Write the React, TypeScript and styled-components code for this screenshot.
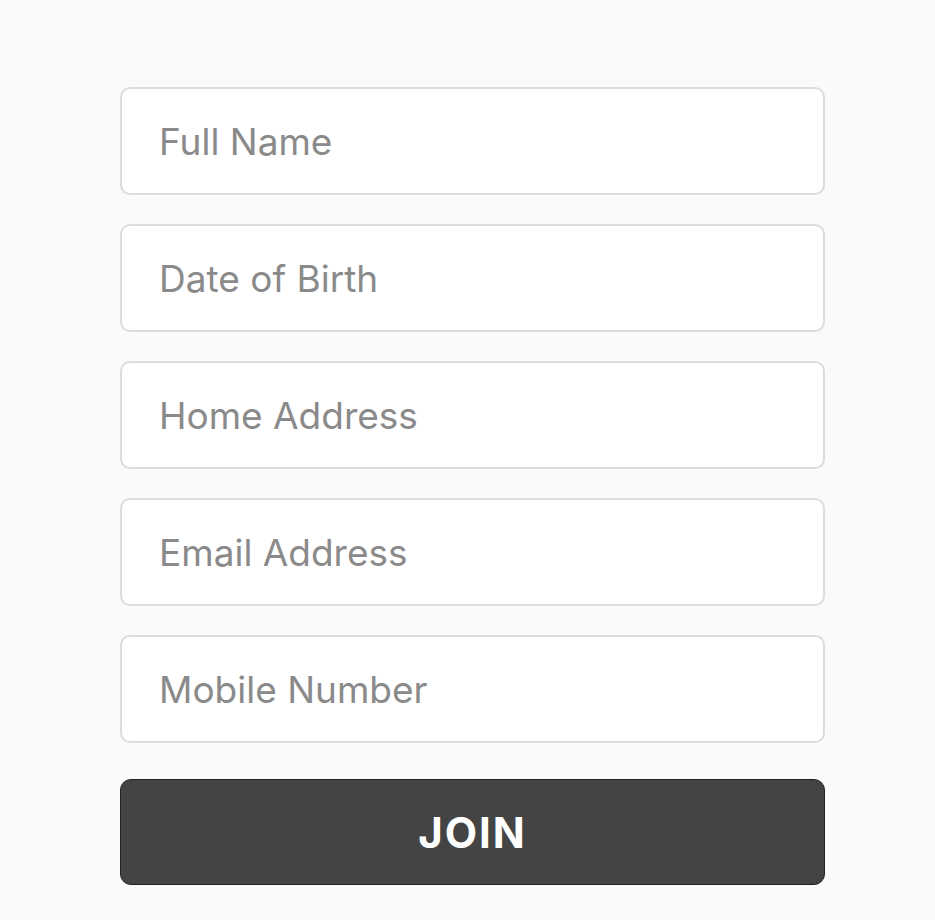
import React from 'react'
import styled, { createGlobalStyle } from 'styled-components'

const GlobalStyle = createGlobalStyle`
  html, body {
    margin: 0;
    padding: 0;
    background: #fafafa;
  }
  body {
    font-family: Inter, "Noto Sans", sans-serif;
  }
`;

const Page = styled.div`
  width: 935px;
  height: 920px;
  display: flex;
  padding: 87px 0 0 120px;
  box-sizing: border-box;
`;

const Form = styled.form`
  width: 705px;
  display: flex;
  flex-direction: column;
  gap: 29px;
`;

const Field = styled.input`
  height: 108px;
  box-sizing: border-box;
  border: 2px solid #dcdcdc;
  border-radius: 10px;
  background: #fff;
  padding: 0 37px;
  font-family: Inter, "Noto Sans", sans-serif;
  font-size: 37px;
  color: #333;
  outline: none;
  &::placeholder {
    color: #8a8a8a;
  }
`;

const JoinButton = styled.button`
  margin-top: 7px;
  height: 106px;
  border: 1px solid #222;
  border-radius: 11px;
  background: #444;
  color: #fff;
  font-family: Inter, "Noto Sans", sans-serif;
  font-size: 42px;
  font-weight: 700;
  letter-spacing: 2px;
  cursor: pointer;
`;

const fields = ['Full Name', 'Date of Birth', 'Home Address', 'Email Address', 'Mobile Number'];

const App = () => {
  return (
    <>
      <GlobalStyle />
      <Page>
        <Form onSubmit={e => e.preventDefault()}>
          {fields.map(f => (
            <Field key={f} type="text" placeholder={f} />
          ))}
          <JoinButton type="submit">JOIN</JoinButton>
        </Form>
      </Page>
    </>
  )
}

export default App
